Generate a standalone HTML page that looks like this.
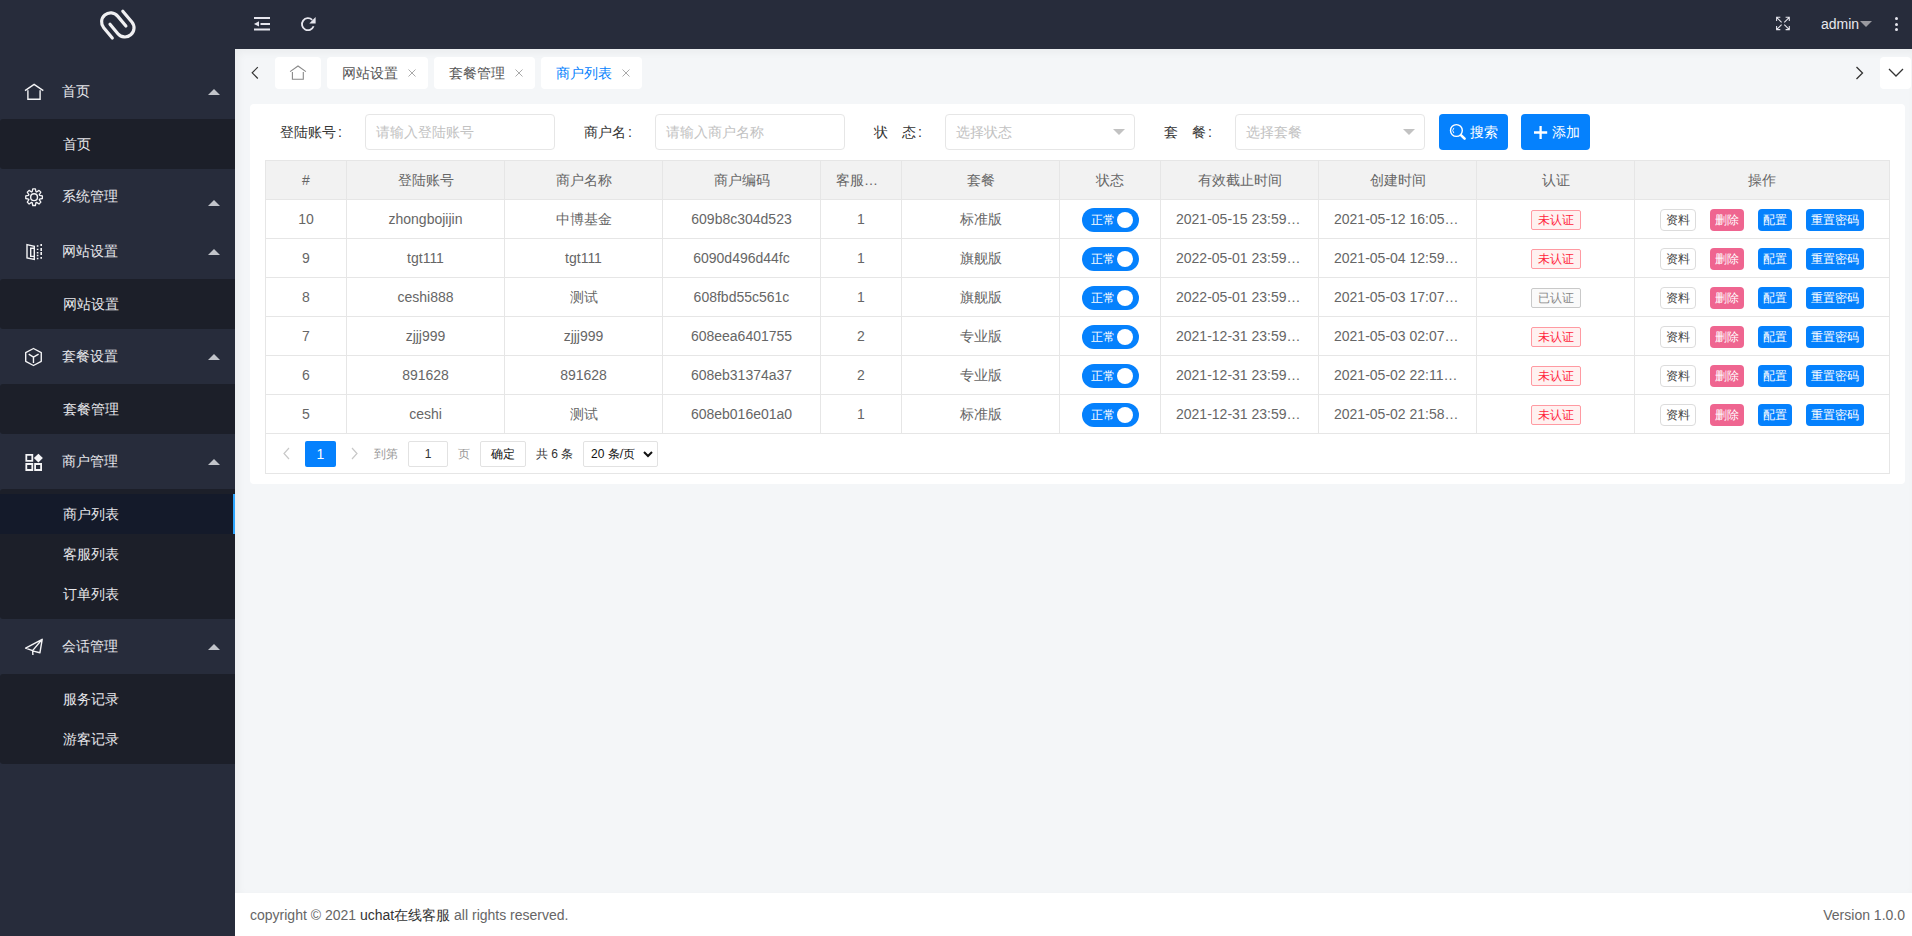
<!DOCTYPE html>
<html><head><meta charset="utf-8">
<style>
*{box-sizing:border-box;margin:0;padding:0}
html,body{width:1912px;height:936px;overflow:hidden;font-family:"Liberation Sans",sans-serif;font-size:14px;color:#666;background:#f4f6f8}
.abs{position:absolute}
.cl{display:inline-block;width:14px;padding-left:2px}
#side{position:absolute;left:0;top:0;width:235px;height:936px;background:#272c3b}
#head{position:absolute;left:235px;top:0;width:1677px;height:49px;background:#272c3b}
.pitem{position:absolute;left:0;width:235px;height:55px;line-height:55px;color:#e8e8ec}
.pitem .txt{position:absolute;left:62px;top:0}
.pitem svg{position:absolute;left:25px}
.more{position:absolute;left:208px;width:0;height:0;border-left:6px solid transparent;border-right:6px solid transparent;border-bottom:6px solid #c2c4ca}
.sub{position:absolute;left:0;width:235px;background:#1c1f29;border-radius:3px 0 0 3px}
.sitem{position:absolute;left:0;width:235px;height:40px;line-height:40px;color:#e8e8ec}
.sitem .txt{position:absolute;left:63px}
.sitem.act{background:#141a2a}
.sitem.act:after{content:"";position:absolute;right:0;top:0;width:2px;height:40px;background:#2ea6ff}
#tabs{position:absolute;left:235px;top:49px;width:1677px;height:55px}
.tab{position:absolute;top:8px;height:32px;line-height:32px;background:#fff;border-radius:4px;color:#555}
.tab .t{position:absolute;left:15px;top:0}
.tab .x{position:absolute;top:12px;width:8px;height:8px}
#card{position:absolute;left:250px;top:104px;width:1655px;height:380px;background:#fff;border-radius:4px}
.lbl{position:absolute;top:114px;height:36px;line-height:36px;color:#333}
.inp{position:absolute;top:114px;width:190px;height:36px;border:1px solid #e6e6e6;border-radius:4px;line-height:34px;padding-left:10px;color:#c2c2c2;background:#fff}
.inp .caret{position:absolute;right:9px;top:14px;width:0;height:0;border-left:6px solid transparent;border-right:6px solid transparent;border-top:6px solid #c2c2c2}
.btn{position:absolute;top:114px;width:69px;height:36px;line-height:36px;background:#0581fd;color:#fff;border-radius:4px;font-size:14px}
table{position:absolute;left:265px;top:160px;width:1625px;border-collapse:collapse;table-layout:fixed}
th,td{border:1px solid #e6e6e6;height:39px;text-align:center;font-weight:normal;color:#666;padding:0}
.cell{height:38px;line-height:38px;padding:0 15px;overflow:hidden;text-overflow:ellipsis;white-space:nowrap}
th{background:#f2f2f2}
.sw{display:inline-block;position:relative;width:57px;height:24px;border-radius:12px;background:#0581fd;vertical-align:middle;color:#fff;font-size:12px;line-height:24px;text-align:left;padding-left:9px}
.sw:after{content:"";position:absolute;right:6px;top:4px;width:16px;height:16px;border-radius:50%;background:#fff}
.tag{display:inline-block;position:relative;width:50px;height:20px;line-height:18px;font-size:12px;border:1px solid #ff9aa2;background:#fff1f0;color:#ff1e3c;border-radius:2px;vertical-align:middle}
.tag.ok{border-color:#c9c9c9;background:#fafafa;color:#888}
.ops{position:relative;height:38px}
.b{position:absolute;top:9px;height:22px;line-height:22px;font-size:12px;color:#fff;border-radius:4px;text-align:center}
.b1{left:25px;width:36px;border:1px solid #dcdcdc;background:#fff;color:#444;line-height:20px}
.b2{left:75px;width:34px;background:#ef6590}
.b3{left:123px;width:34px;background:#0581fd}
.b4{left:171px;width:58px;background:#0581fd}
#pager{position:absolute;left:265px;top:433px;width:1625px;height:41px;border:1px solid #e6e6e6;border-top:none}
#foot{position:absolute;left:235px;top:893px;width:1677px;height:43px;background:#fff;color:#666}
</style></head><body>
<div id="side">
<svg class="abs" style="left:0;top:0;z-index:5" width="235" height="936" viewBox="0 0 235 936">
<g fill="none" stroke="#f0f0f2" stroke-width="3.2" stroke-linecap="round">
<path d="M112.3 38.0 L103.72 27.79 A9.07 9.07 0 0 1 117.62 16.13 L125.9 26.0"/>
<path d="M122.8 11.2 L131.87 22.01 A9.11 9.11 0 0 1 117.91 33.73 L110.0 24.3"/>
</g>
<g fill="none" stroke="#f4f4f6" stroke-width="1.4">
<path d="M25 90.6 L34.1 84.3 L43.3 90.6 M27.9 90.3 V99.2 H40.1 V90.3"/>
<path transform="translate(25.07 188.2)" stroke-width="1.3" d="M7.11 3.52 L7.69 0.70 L10.31 0.70 L10.89 3.52 L11.54 3.79 L13.94 2.20 L15.80 4.06 L14.21 6.46 L14.48 7.11 L17.30 7.69 L17.30 10.31 L14.48 10.89 L14.21 11.54 L15.80 13.94 L13.94 15.80 L11.54 14.21 L10.89 14.48 L10.31 17.30 L7.69 17.30 L7.11 14.48 L6.46 14.21 L4.06 15.80 L2.20 13.94 L3.79 11.54 L3.52 10.89 L0.70 10.31 L0.70 7.69 L3.52 7.11 L3.79 6.46 L2.20 4.06 L4.06 2.20 L6.46 3.79 Z" stroke-linejoin="round"/>
<circle cx="34.07" cy="197.2" r="3.4"/>
<path d="M27 244.6 L34.3 246.3 V259.5 L27 257.9 Z M34 248.3 H30.7 V256.4 H34"/>
<path d="M37.6 245.3 V246.7 M37.6 248.7 V250.1 M37.6 252.1 V253.5 M37.6 254.8 V256.2 M37.6 257.8 V259.2 M41.2 244.1 V245.9 M41.2 248.1 V250.9 M41.2 252.1 V254.9 M41.2 257.0 V258.8" stroke-width="1.6"/>
<path d="M33.47 348.5 L41.26 352.6 V361.3 L33.47 365.5 L25.7 361.3 V352.6 Z M28.7 354.2 L33.47 357.1 L38.6 354.2 M33.47 357.1 V362.9" stroke-linejoin="round"/>
<path d="M26.3 454.9 h6 v6 h-6 Z M26.3 464 h6 v6 h-6 Z M35.1 464 h6 v6 h-6 Z" stroke-width="1.8"/>
<path d="M38.4 453.7 L42.9 458.1 L38.4 462.5 L33.9 458.1 Z" fill="#f4f4f6" stroke="none"/>
<path d="M42.2 639.3 L25.6 648.1 L32.6 650.6 L32.9 655 M32.6 650.6 L42.2 639.3 L39.9 652.8 L33.4 651.1" stroke-linejoin="round"/>
</g>
</svg>

  
  <div class="pitem" style="top:64px"><span class="txt">首页</span><i class="more" style="top:25px"></i></div>
  <div class="sub" style="top:119px;height:50px"><div class="sitem" style="top:5px"><span class="txt">首页</span></div></div>
  <div class="pitem" style="top:169px"><span class="txt">系统管理</span><i class="more" style="top:31px"></i></div>
  <div class="pitem" style="top:224px"><span class="txt">网站设置</span><i class="more" style="top:25px"></i></div>
  <div class="sub" style="top:279px;height:50px"><div class="sitem" style="top:5px"><span class="txt">网站设置</span></div></div>
  <div class="pitem" style="top:329px"><span class="txt">套餐设置</span><i class="more" style="top:25px"></i></div>
  <div class="sub" style="top:384px;height:50px"><div class="sitem" style="top:5px"><span class="txt">套餐管理</span></div></div>
  <div class="pitem" style="top:434px"><span class="txt">商户管理</span><i class="more" style="top:25px"></i></div>
  <div class="sub" style="top:489px;height:130px">
    <div class="sitem act" style="top:5px"><span class="txt">商户列表</span></div>
    <div class="sitem" style="top:45px"><span class="txt">客服列表</span></div>
    <div class="sitem" style="top:85px"><span class="txt">订单列表</span></div>
  </div>
  <div class="pitem" style="top:619px"><span class="txt">会话管理</span><i class="more" style="top:25px"></i></div>
  <div class="sub" style="top:674px;height:90px">
    <div class="sitem" style="top:5px"><span class="txt">服务记录</span></div>
    <div class="sitem" style="top:45px"><span class="txt">游客记录</span></div>
  </div>
</div>
<div id="head">
  <span class="abs" style="left:1586px;top:15px;color:#e8e8ee;font-size:14px;line-height:18px">admin</span>
  <i class="abs" style="left:1625px;top:21px;width:0;height:0;border-left:6px solid transparent;border-right:6px solid transparent;border-top:6px solid #9a9aa0"></i>
  <i class="abs" style="left:1660px;top:17px;width:3px;height:3px;background:#e6e6ee;border-radius:50%"></i>
  <i class="abs" style="left:1660px;top:22.5px;width:3px;height:3px;background:#e6e6ee;border-radius:50%"></i>
  <i class="abs" style="left:1660px;top:28px;width:3px;height:3px;background:#e6e6ee;border-radius:50%"></i>
</div>
<div class="abs" style="left:235px;top:49px;width:1677px;height:844px;box-shadow:inset 3px 3px 8px rgba(0,0,0,0.045)"></div>
<div id="tabs">
  <div class="tab" style="left:40px;width:46px"></div>
  <div class="tab" style="left:92px;width:101px"><span class="t">网站设置</span><svg class="x" style="left:81px" viewBox="0 0 8 8"><path d="M0.5 0.5 L7.5 7.5 M7.5 0.5 L0.5 7.5" stroke="#aaa" stroke-width="1"/></svg></div>
  <div class="tab" style="left:199px;width:101px"><span class="t">套餐管理</span><svg class="x" style="left:81px" viewBox="0 0 8 8"><path d="M0.5 0.5 L7.5 7.5 M7.5 0.5 L0.5 7.5" stroke="#aaa" stroke-width="1"/></svg></div>
  <div class="tab" style="left:306px;width:101px;color:#0581fd"><span class="t">商户列表</span><svg class="x" style="left:81px" viewBox="0 0 8 8"><path d="M0.5 0.5 L7.5 7.5 M7.5 0.5 L0.5 7.5" stroke="#aaa" stroke-width="1"/></svg></div>
  <svg class="abs" style="left:1620px;top:17px" width="9" height="14" viewBox="0 0 9 14"><path d="M1.5 1 L7.5 7 L1.5 13" fill="none" stroke="#333" stroke-width="1.3"/></svg>
  <div class="tab" style="left:1645px;width:31px"><svg class="abs" style="left:8px;top:11px" width="16" height="10" viewBox="0 0 16 10"><path d="M1 1 L8 8 L15 1" fill="none" stroke="#333" stroke-width="1.3"/></svg></div>
</div>
<div id="card"></div>
<span class="lbl" style="left:280px">登陆账号<span class="cl">:</span></span>
<div class="inp" style="left:365px">请输入登陆账号</div>
<span class="lbl" style="left:584px">商户名<span class="cl">:</span></span>
<div class="inp" style="left:655px">请输入商户名称</div>
<span class="lbl" style="left:874px">状<span style="display:inline-block;width:14px"></span>态<span class="cl">:</span></span>
<div class="inp" style="left:945px">选择状态<i class="caret"></i></div>
<span class="lbl" style="left:1164px">套<span style="display:inline-block;width:14px"></span>餐<span class="cl">:</span></span>
<div class="inp" style="left:1235px">选择套餐<i class="caret"></i></div>
<div class="btn" style="left:1439px"><span class="abs" style="left:31px">搜索</span></div>
<div class="btn" style="left:1521px"><span class="abs" style="left:31px">添加</span></div>
<table>
<colgroup><col style="width:81px"><col style="width:158px"><col style="width:158px"><col style="width:158px"><col style="width:81px"><col style="width:158px"><col style="width:101px"><col style="width:158px"><col style="width:158px"><col style="width:158px"><col style="width:255px"></colgroup>
<tr><th><div class="cell">#</div></th><th><div class="cell">登陆账号</div></th><th><div class="cell">商户名称</div></th><th><div class="cell">商户编码</div></th><th><div class="cell">客服数量</div></th><th><div class="cell">套餐</div></th><th><div class="cell">状态</div></th><th><div class="cell">有效截止时间</div></th><th><div class="cell">创建时间</div></th><th><div class="cell">认证</div></th><th><div class="cell">操作</div></th></tr>
<tr><td><div class="cell">10</div></td><td><div class="cell">zhongbojijin</div></td><td><div class="cell">中博基金</div></td><td><div class="cell">609b8c304d523</div></td><td><div class="cell">1</div></td><td><div class="cell">标准版</div></td><td><div class="cell"><span class="sw">正常</span></div></td><td><div class="cell">2021-05-15 23:59:59</div></td><td><div class="cell">2021-05-12 16:05:23</div></td><td><div class="cell"><span class="tag">未认证</span></div></td><td><div class="ops"><span class="b b1">资料</span><span class="b b2">删除</span><span class="b b3">配置</span><span class="b b4">重置密码</span></div></td></tr>
<tr><td><div class="cell">9</div></td><td><div class="cell">tgt111</div></td><td><div class="cell">tgt111</div></td><td><div class="cell">6090d496d44fc</div></td><td><div class="cell">1</div></td><td><div class="cell">旗舰版</div></td><td><div class="cell"><span class="sw">正常</span></div></td><td><div class="cell">2022-05-01 23:59:59</div></td><td><div class="cell">2021-05-04 12:59:41</div></td><td><div class="cell"><span class="tag">未认证</span></div></td><td><div class="ops"><span class="b b1">资料</span><span class="b b2">删除</span><span class="b b3">配置</span><span class="b b4">重置密码</span></div></td></tr>
<tr><td><div class="cell">8</div></td><td><div class="cell">ceshi888</div></td><td><div class="cell">测试</div></td><td><div class="cell">608fbd55c561c</div></td><td><div class="cell">1</div></td><td><div class="cell">旗舰版</div></td><td><div class="cell"><span class="sw">正常</span></div></td><td><div class="cell">2022-05-01 23:59:59</div></td><td><div class="cell">2021-05-03 17:07:33</div></td><td><div class="cell"><span class="tag ok">已认证</span></div></td><td><div class="ops"><span class="b b1">资料</span><span class="b b2">删除</span><span class="b b3">配置</span><span class="b b4">重置密码</span></div></td></tr>
<tr><td><div class="cell">7</div></td><td><div class="cell">zjjj999</div></td><td><div class="cell">zjjj999</div></td><td><div class="cell">608eea6401755</div></td><td><div class="cell">2</div></td><td><div class="cell">专业版</div></td><td><div class="cell"><span class="sw">正常</span></div></td><td><div class="cell">2021-12-31 23:59:59</div></td><td><div class="cell">2021-05-03 02:07:17</div></td><td><div class="cell"><span class="tag">未认证</span></div></td><td><div class="ops"><span class="b b1">资料</span><span class="b b2">删除</span><span class="b b3">配置</span><span class="b b4">重置密码</span></div></td></tr>
<tr><td><div class="cell">6</div></td><td><div class="cell">891628</div></td><td><div class="cell">891628</div></td><td><div class="cell">608eb31374a37</div></td><td><div class="cell">2</div></td><td><div class="cell">专业版</div></td><td><div class="cell"><span class="sw">正常</span></div></td><td><div class="cell">2021-12-31 23:59:59</div></td><td><div class="cell">2021-05-02 22:11:15</div></td><td><div class="cell"><span class="tag">未认证</span></div></td><td><div class="ops"><span class="b b1">资料</span><span class="b b2">删除</span><span class="b b3">配置</span><span class="b b4">重置密码</span></div></td></tr>
<tr><td><div class="cell">5</div></td><td><div class="cell">ceshi</div></td><td><div class="cell">测试</div></td><td><div class="cell">608eb016e01a0</div></td><td><div class="cell">1</div></td><td><div class="cell">标准版</div></td><td><div class="cell"><span class="sw">正常</span></div></td><td><div class="cell">2021-12-31 23:59:59</div></td><td><div class="cell">2021-05-02 21:58:24</div></td><td><div class="cell"><span class="tag">未认证</span></div></td><td><div class="ops"><span class="b b1">资料</span><span class="b b2">删除</span><span class="b b3">配置</span><span class="b b4">重置密码</span></div></td></tr>
</table>
<div id="pager">
  <svg class="abs" style="left:16px;top:14px" width="9" height="13" viewBox="0 0 9 13"><path d="M7 1 L2 6.5 L7 12" fill="none" stroke="#c8c8c8" stroke-width="1.2"/></svg>
  <div class="abs" style="left:39px;top:8px;width:31px;height:26px;line-height:26px;background:#0581fd;color:#fff;text-align:center;border-radius:2px">1</div>
  <svg class="abs" style="left:84px;top:14px" width="9" height="13" viewBox="0 0 9 13"><path d="M2 1 L7 6.5 L2 12" fill="none" stroke="#c8c8c8" stroke-width="1.2"/></svg>
  <span class="abs" style="left:108px;top:8px;line-height:26px;font-size:12px;color:#999">到第</span>
  <div class="abs" style="left:142px;top:8px;width:40px;height:26px;line-height:24px;border:1px solid #e2e2e2;border-radius:2px;text-align:center;color:#333;font-size:12px">1</div>
  <span class="abs" style="left:192px;top:8px;line-height:26px;font-size:12px;color:#999">页</span>
  <div class="abs" style="left:214px;top:8px;width:46px;height:26px;line-height:24px;border:1px solid #e2e2e2;border-radius:2px;text-align:center;color:#111;font-size:12px">确定</div>
  <span class="abs" style="left:270px;top:8px;line-height:26px;font-size:12px;color:#333">共 6 条</span>
  <div class="abs" style="left:317px;top:8px;width:75px;height:26px;line-height:24px;border:1px solid #e2e2e2;border-radius:2px;color:#111;font-size:12px;padding-left:7px">20 条/页<svg class="abs" style="left:59px;top:9px" width="10" height="7" viewBox="0 0 10 7"><path d="M1 1 L5 5 L9 1" fill="none" stroke="#111" stroke-width="2"/></svg></div>
</div>
<div id="foot">
  <span class="abs" style="left:15px;top:13px;line-height:18px">copyright © 2021 <span style="color:#333">uchat在线客服</span> all rights reserved.</span>
  <span class="abs" style="right:7px;top:13px;line-height:18px">Version 1.0.0</span>
</div>
<svg class="abs" style="left:0;top:0;z-index:6;pointer-events:none" width="1912" height="936" viewBox="0 0 1912 936">
<g fill="#e6e6ee">
<rect x="254" y="17" width="16" height="2"/><rect x="260.5" y="23" width="9.5" height="2"/><rect x="254" y="28.5" width="16" height="2"/>
<path d="M254 23.9 L259 21.3 V26.5 Z"/>
<path d="M309.3 23.6 L315.6 17 V23.6 Z"/>
</g>
<path d="M313.6 26.3 A6 6 0 1 1 312.2 19.9" fill="none" stroke="#e6e6ee" stroke-width="1.8"/>
<path d="M1776.6 20.9 V17.3 H1780.3 M1776.6 17.3 L1781.6 22.3 M1789.3 20.9 V17.3 H1785.6 M1789.3 17.3 L1784.3 22.3 M1776.6 26 V29.6 H1780.3 M1776.6 29.6 L1781.6 24.6 M1789.3 26 V29.6 H1785.6 M1789.3 29.6 L1784.3 24.6" fill="none" stroke="#e6e6ee" stroke-width="1.05"/>
<path d="M257.8 67.2 L252.2 72.8 L257.8 78.5" fill="none" stroke="#333" stroke-width="1.2"/>
<path d="M290.1 71.6 L298 66 L305.9 71.6 M292.4 72 V79.3 H303.3 V72" fill="none" stroke="#888" stroke-width="1.1"/>
<circle cx="1456.4" cy="130.5" r="5.9" fill="none" stroke="#fff" stroke-width="1.4"/>
<path d="M1453.9 127.9 A3.8 3.8 0 0 0 1453.9 133.1" fill="none" stroke="#fff" stroke-width="0.9"/>
<path d="M1461.2 135.3 L1464.6 138.7" stroke="#fff" stroke-width="2.6" stroke-linecap="round"/>
<path d="M1540.6 126 V139 M1534 132.5 H1547.2" stroke="#fff" stroke-width="2.3"/>
</svg>
</body></html>
